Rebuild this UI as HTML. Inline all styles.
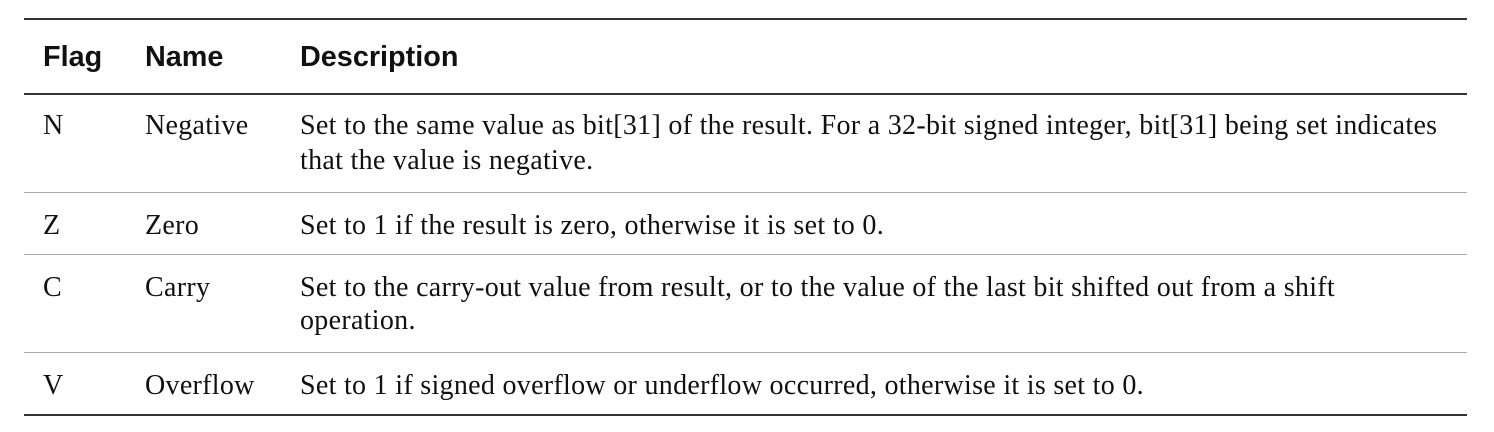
<!DOCTYPE html>
<html><head><style>
html,body{margin:0;padding:0;background:#fff;width:1494px;height:432px;overflow:hidden;position:relative}
.l{position:absolute;left:24px;width:1443px}
.t{position:absolute;white-space:nowrap;font-family:"Liberation Serif",serif;font-size:28px;letter-spacing:0.3px;line-height:35px;color:#111}
.h{font-family:"Liberation Sans",sans-serif;font-weight:bold;font-size:28.8px;letter-spacing:0;color:#111}
</style></head><body>
<div class="l" style="top:18px;height:2px;background:#333"></div>
<div class="l" style="top:93px;height:2px;background:#333"></div>
<div class="l" style="top:192px;height:1px;background:#aaa"></div>
<div class="l" style="top:254px;height:1px;background:#aaa"></div>
<div class="l" style="top:352px;height:1px;background:#aaa"></div>
<div class="l" style="top:414px;height:2px;background:#333"></div>

<div class="t h" style="left:43px;top:40px">Flag</div>
<div class="t h" style="left:145px;top:40px">Name</div>
<div class="t h" style="left:300px;top:40px">Description</div>

<div class="t" style="left:43px;top:108px">N</div>
<div class="t" style="left:145px;top:108px">Negative</div>
<div class="t" style="left:300px;top:108px">Set to the same value as bit[31] of the result. For a 32-bit signed integer, bit[31] being set indicates</div>
<div class="t" style="left:300px;top:143px">that the value is negative.</div>

<div class="t" style="left:43px;top:208px">Z</div>
<div class="t" style="left:145px;top:208px">Zero</div>
<div class="t" style="left:300px;top:208px">Set to 1 if the result is zero, otherwise it is set to 0.</div>

<div class="t" style="left:43px;top:270px">C</div>
<div class="t" style="left:145px;top:270px">Carry</div>
<div class="t" style="left:300px;top:270px">Set to the carry-out value from result, or to the value of the last bit shifted out from a shift</div>
<div class="t" style="left:300px;top:303px">operation.</div>

<div class="t" style="left:43px;top:368px">V</div>
<div class="t" style="left:145px;top:368px">Overflow</div>
<div class="t" style="left:300px;top:368px">Set to 1 if signed overflow or underflow occurred, otherwise it is set to 0.</div>
</body></html>
